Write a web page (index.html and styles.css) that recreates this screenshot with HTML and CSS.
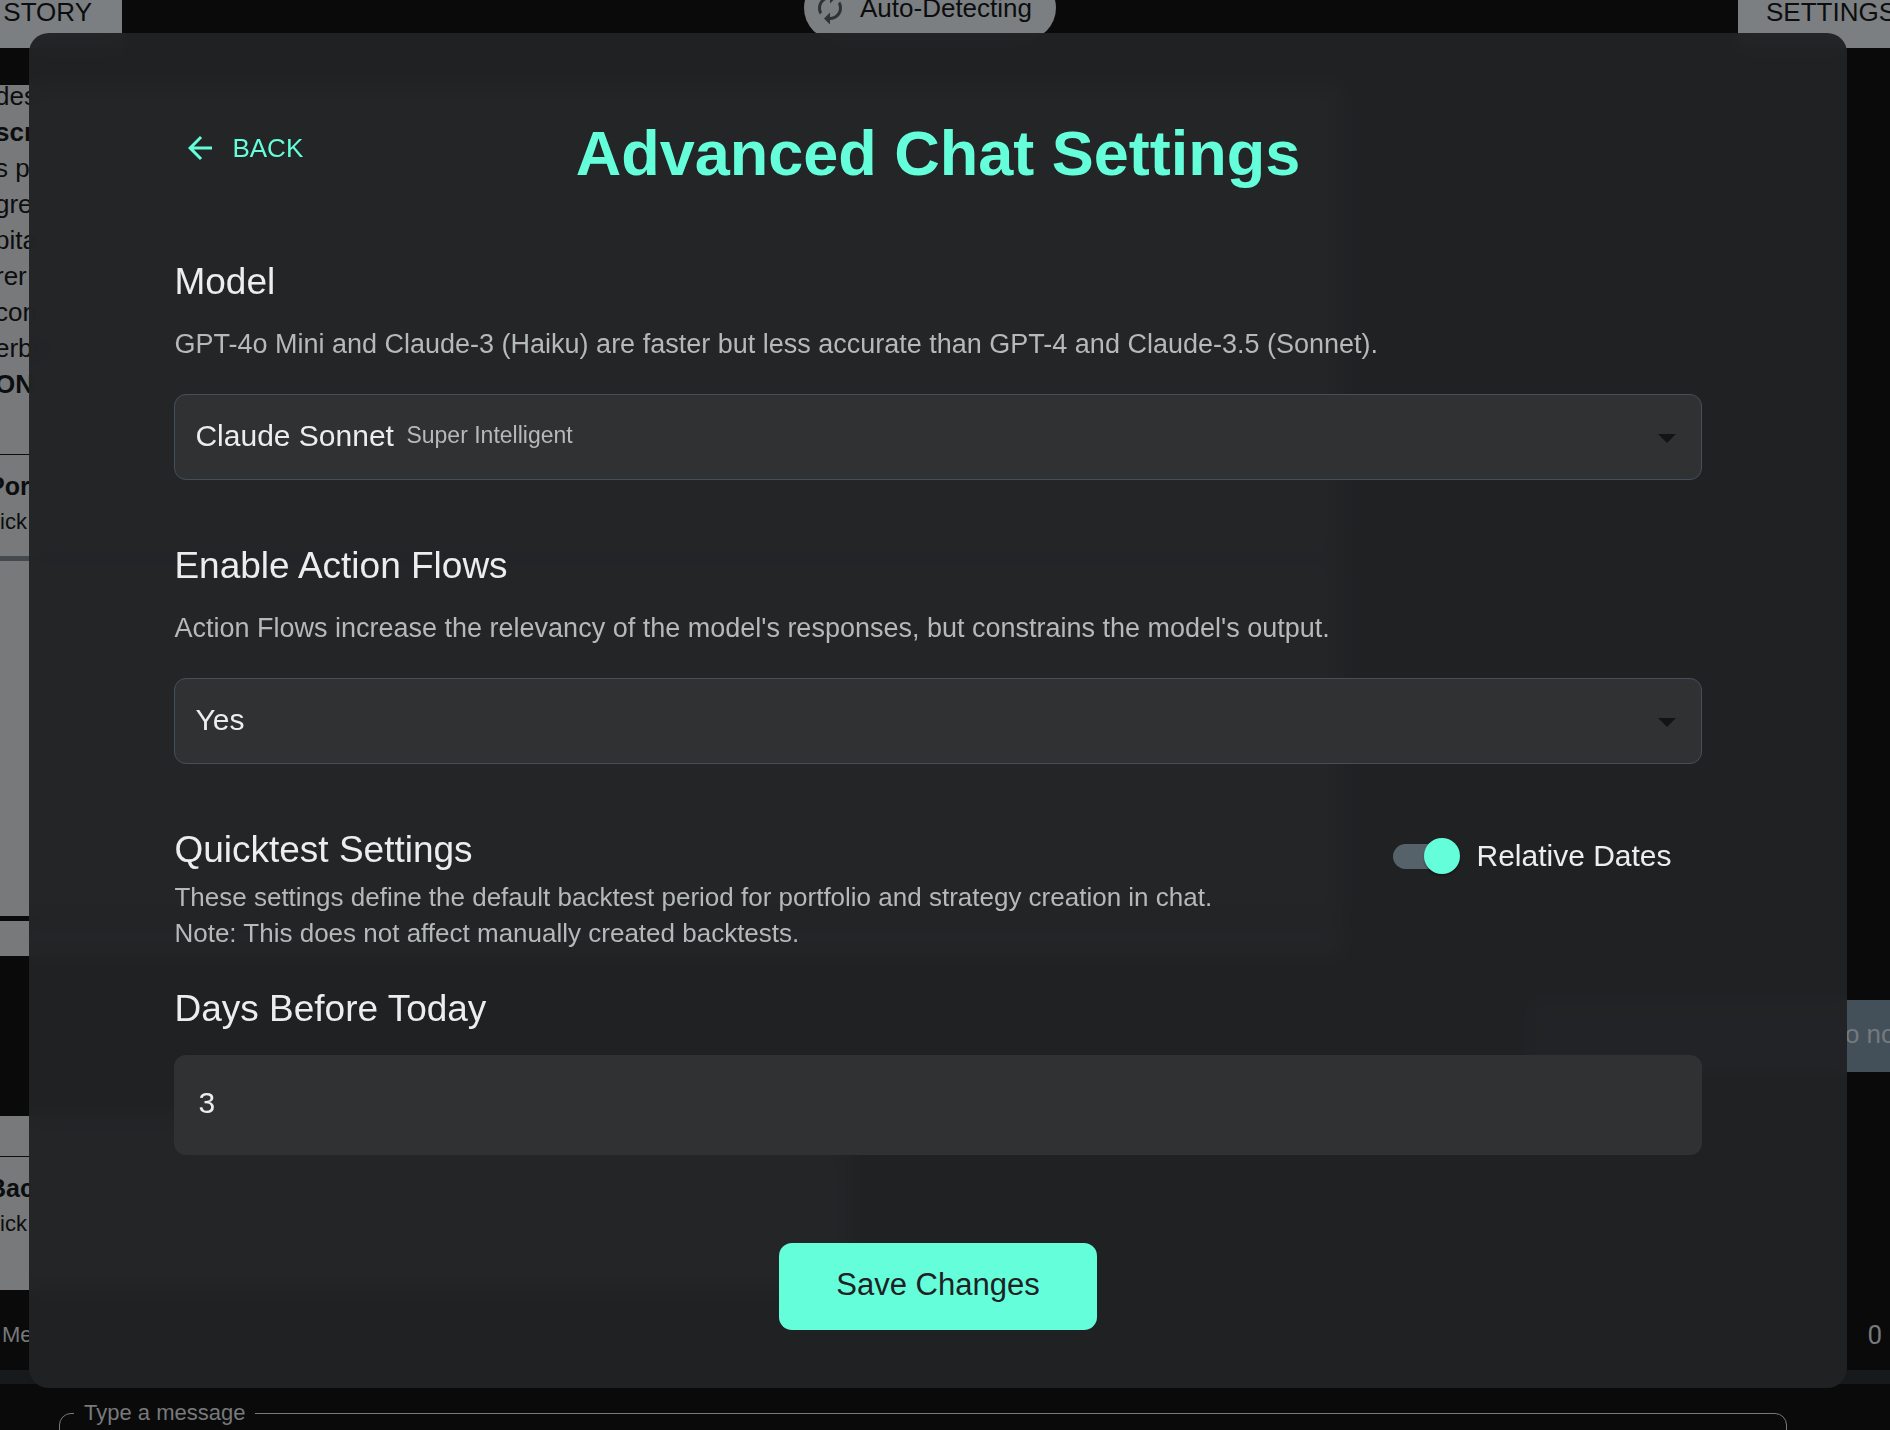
FILE: index.html
```html
<!DOCTYPE html>
<html lang="en">
<head>
    <meta charset="UTF-8">
    <title>Advanced Chat Settings</title>
    <link rel="stylesheet" href="styles.css">
</head>
<body>
<div class="app">
    <header class="topbar">
        <button class="tab tab-left" type="button">STORY</button>
        <div class="pill">
            <svg class="pill-icon" viewBox="0 0 24 24"><path d="M12 6v3l4-4-4-4v3c-4.420 0-8 3.580-8 8 0 1.570.46 3.030 1.240 4.260L6.700 14.800A5.870 5.870 0 0 1 6 12c0-3.310 2.690-6 6-6zm6.760 1.740L17.300 9.200c.44.840.7 1.790.7 2.800 0 3.310-2.690 6-6 6v-3l-4 4 4 4v-3c4.420 0 8-3.580 8-8 0-1.570-.46-3.030-1.240-4.260z"/></svg>
            <span>Auto-Detecting</span>
        </div>
        <button class="tab tab-right" type="button">SETTINGS</button>
    </header>
    <div class="chat">
        <div class="bubble bubble-first">
            <div class="lines">
                <p>des</p>
                <p><b>scr</b></p>
                <p>s p</p>
                <p>gre</p>
                <p>pita</p>
                <p>rer</p>
                <p>con</p>
                <p>erbo</p>
                <p><b>ON</b></p>
            </div>
            <div class="card">
                <b>Por</b>
                <span>ick</span>
            </div>
            <div class="card-body"></div>
        </div>
        <div class="reply">o no</div>
        <div class="bubble bubble-second">
            <div class="card">
                <b>Bac</b>
                <span>ick</span>
            </div>
        </div>
    </div>
    <div class="status">
        <span>Me</span>
        <span class="count">0</span>
    </div>
    <div class="divider"></div>
    <fieldset class="composer">
        <legend><label for="message">Type a message</label></legend>
        <input id="message" type="text">
    </fieldset>
</div>

<div class="overlay">
    <form class="modal" role="dialog" aria-labelledby="title">
        <div class="modal-head">
            <button class="back" type="button">
                <svg viewBox="0 0 24 24"><path d="M20 11H7.830l5.590-5.590L12 4l-8 8 8 8 1.410-1.410L7.830 13H20v-2z"/></svg>
                BACK
            </button>
            <h1 id="title">Advanced Chat Settings</h1>
        </div>

        <section class="group">
            <h2><label for="model">Model</label></h2>
            <p class="hint">GPT-4o Mini and Claude-3 (Haiku) are faster but less accurate than GPT-4 and Claude-3.5 (Sonnet).</p>
            <div class="select">
                <select id="model">
                    <option>Claude Sonnet</option>
                </select>
                <span class="tag">Super Intelligent</span>
            </div>
        </section>

        <section class="group">
            <h2><label for="flows">Enable Action Flows</label></h2>
            <p class="hint">Action Flows increase the relevancy of the model's responses, but constrains the model's output.</p>
            <div class="select">
                <select id="flows">
                    <option>Yes</option>
                    <option>No</option>
                </select>
            </div>
        </section>

        <section class="quicktest">
            <div>
                <h2>Quicktest Settings</h2>
                <p>These settings define the default backtest period for portfolio and strategy creation in chat.<br>
                Note: This does not affect manually created backtests.</p>
            </div>
            <label class="switch">
                <input type="checkbox" checked>
                Relative Dates
            </label>
        </section>

        <section class="days">
            <h2><label for="days">Days Before Today</label></h2>
            <input id="days" type="text" inputmode="numeric" value="3">
        </section>

        <button class="save" type="submit">Save Changes</button>
    </form>
</div>
</body>
</html>
```
FILE: styles.css
```css
*{
    box-sizing: border-box;
}

body{
    margin: 0;
    background: #0a0a0a;
    font-family: "Liberation Sans", Arial, sans-serif;
    font-size: 26px;
    line-height: 36px;
}

h1, h2, p{
    margin: 0;
}

button, input, select{
    font-family: inherit;
    margin: 0;
}

/* chat page behind the dialog */
.app{
    height: 100vh;
    overflow: hidden;
    display: flex;
    flex-direction: column;
    color: #0c0d0e;
}

.topbar{
    flex: none;
    height: 72px;
    margin-top: -24px;
    display: flex;
    justify-content: space-between;
}

.tab{
    border: 0;
    background: #7b7f81;
    color: #0c0d0e;
    font-size: 26px;
    width: 152px;
    display: flex;
    align-items: center;
}

.tab-left{
    margin-left: -30px;
    padding: 0 30px 0 0;
    justify-content: flex-end;
}

.tab-right{
    margin-right: -30px;
    padding: 0 0 0 28px;
    width: 182px;
}

.pill{
    height: 64px;
    padding: 0 24px 0 8px;
    border-radius: 32px;
    background: #7b7f81;
    display: flex;
    align-items: center;
    gap: 12px;
}

.pill-icon{
    width: 36px;
    height: 36px;
    fill: #2f3335;
}

.chat{
    flex: none;
    padding-top: 37px;
    display: flex;
    flex-direction: column;
}

.bubble{
    background: #77797b;
    overflow: hidden;
}

.bubble-first{
    width: 71%;
    height: 871px;
}

.lines{
    margin: -7px 0 0 -5px;
    height: 376px;
}

.card{
    border-top: 1px solid #0c0d0e;
    height: 102px;
    padding-top: 13px;
    margin-left: -12px;
    display: flex;
    flex-direction: column;
}

.card b{
    font-size: 25px;
}

.card span{
    font-size: 22px;
    padding-left: 12px;
}

.card-body{
    height: 365px;
    border-top: 5px solid #43494c;
    border-bottom: 5px solid #0a0a0a;
}

.reply{
    align-self: flex-end;
    width: 19%;
    height: 72px;
    margin: 44px 0;
    padding-top: 16px;
    padding-left: 314px;
    background: #43505a;
    color: #75797c;
    white-space: nowrap;
    overflow: hidden;
}

.bubble-second{
    width: 45%;
    height: 174px;
    padding-top: 40px;
}

.status{
    flex: none;
    height: 80px;
    padding: 27px 8px 0 2px;
    display: flex;
    justify-content: space-between;
    color: #77797b;
    font-size: 22px;
}

.status .count{
    font-family: Roboto, sans-serif;
    font-size: 26px;
}

.divider{
    flex: none;
    height: 14px;
    background: #18191a;
}

.composer{
    flex: none;
    margin: 16px 103px 0 59px;
    padding: 0 14px;
    height: 100px;
    border: 1px solid #77797b;
    border-radius: 12px;
}

.composer legend{
    padding: 0 10px;
    color: #77797b;
    font-size: 22px;
    line-height: 26px;
}

.composer input{
    width: 100%;
    border: 0;
    background: none;
    color: #77797b;
}

/* dialog */
.overlay{
    position: fixed;
    inset: 0;
    padding: 33px 43px 42px 29px;
}

.modal{
    padding: 84px 8% 58px;
    border-radius: 20px;
    background: rgba(33, 34, 36, .97);
    -webkit-backdrop-filter: blur(10px);
    backdrop-filter: blur(10px);
    color: #eceeee;
    display: flex;
    flex-direction: column;
}

.modal-head{
    display: grid;
    grid-template-columns: 1fr auto 1fr;
    align-items: start;
    margin-bottom: 71px;
}

.modal h1{
    color: #64ffda;
    font-size: 63px;
    line-height: 72px;
}

.modal h2{
    font-size: 37px;
    line-height: 44px;
    font-weight: 400;
}

.back{
    justify-self: start;
    height: 62px;
    padding: 0 8px;
    border: 0;
    background: none;
    color: #64ffda;
    font-size: 26px;
    display: flex;
    align-items: center;
    gap: 14px;
}

.back svg{
    width: 36px;
    height: 36px;
    fill: currentColor;
}

.group{
    margin-bottom: 64px;
}

.hint{
    margin: 22px 0 32px;
    color: #b4b9b9;
    font-size: 27px;
}

.select{
    position: relative;
}

.select select{
    display: block;
    width: 100%;
    height: 86px;
    padding: 0 60px 3px 20px;
    border: 1px solid #43505a;
    border-radius: 12px;
    background: #303133;
    color: #eceeee;
    font-size: 30px;
    appearance: none;
}

/* drop-down arrow */
.select::after{
    content: "";
    position: absolute;
    right: 26px;
    top: 40px;
    border: 9px solid transparent;
    border-top-color: #131415;
    border-bottom: 0;
    pointer-events: none;
}

.tag{
    position: absolute;
    left: 232px;
    top: 23px;
    color: #b4b9b9;
    font-size: 23px;
    pointer-events: none;
}

.quicktest{
    display: flex;
    justify-content: space-between;
    margin-bottom: 36px;
}

.quicktest p{
    margin-top: 7px;
    color: #b4b9b9;
}

.switch{
    height: 56px;
    margin-right: 30px;
    display: flex;
    align-items: center;
    gap: 16px;
    font-size: 30px;
}

.switch input{
    appearance: none;
    position: relative;
    width: 67px;
    height: 36px;
    display: flex;
    justify-content: flex-end;
}

/* track */
.switch input::before{
    content: "";
    position: absolute;
    left: 0;
    top: 6px;
    width: 61px;
    height: 25px;
    border-radius: 13px;
    background: #56626a;
}

/* thumb */
.switch input::after{
    content: "";
    width: 36px;
    height: 36px;
    border-radius: 50%;
    background: #64ffda;
    box-shadow: 0 2px 2px rgba(0, 0, 0, .3);
    z-index: 1;
}

.days input{
    display: block;
    width: 100%;
    height: 100px;
    margin-top: 24px;
    padding: 0 24px 4px;
    border: 0;
    border-radius: 12px;
    background: #303133;
    color: #eceeee;
    font-size: 30px;
}

.save{
    align-self: center;
    margin-top: 88px;
    height: 87px;
    padding: 0 57px 3px;
    border: 0;
    border-radius: 13px;
    background: #64ffda;
    color: #202123;
    font-size: 31px;
}
```
